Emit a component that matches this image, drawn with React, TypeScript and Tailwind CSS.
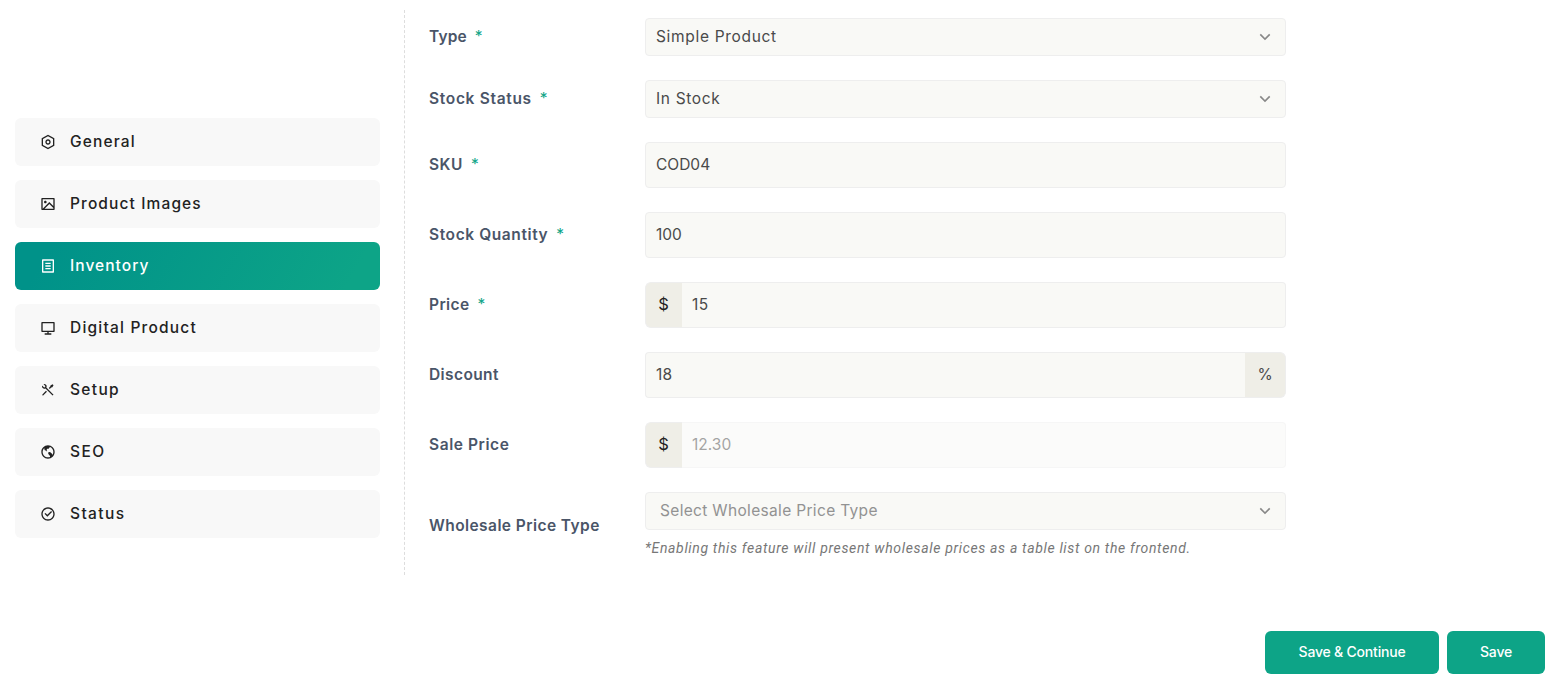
import React from "react";
import {
  RiSettingsLine,
  RiImageLine,
  RiFileListLine,
  RiComputerLine,
  RiToolsLine,
  RiEarthLine,
  RiCheckboxCircleLine,
  RiArrowDownSLine,
} from "react-icons/ri";

const tabs = [
  { label: "General", Icon: RiSettingsLine, track: "tracking-[1.15px]" },
  { label: "Product Images", Icon: RiImageLine, track: "tracking-[1.12px]" },
  { label: "Inventory", Icon: RiFileListLine, track: "tracking-[1.05px]", active: true },
  { label: "Digital Product", Icon: RiComputerLine, track: "tracking-[1.2px]" },
  { label: "Setup", Icon: RiToolsLine, track: "tracking-[1.35px]" },
  { label: "SEO", Icon: RiEarthLine, track: "tracking-[1.4px]" },
  { label: "Status", Icon: RiCheckboxCircleLine, track: "tracking-[1.38px]" },
];

function Row({
  label,
  required,
  track = "tracking-[0.4px]",
  children,
}: {
  label: string;
  required?: boolean;
  track?: string;
  children: React.ReactNode;
}) {
  return (
    <div className="flex items-center">
      <div className="flex w-[216px] shrink-0 gap-2 pb-px text-[15.5px] leading-6 font-semibold whitespace-nowrap text-[#4a5568]">
        <span className={track}>{label}</span>
        {required && <span className="font-normal text-[#0da487]">*</span>}
      </div>
      <div className="w-[641px]">{children}</div>
    </div>
  );
}

const box = "flex w-full rounded border border-[#eeeeee] bg-[#f9f9f6] text-[15.5px] leading-6 text-[#4a4a4a]";

function Select({ value, track, placeholder }: { value: string; track: string; placeholder?: boolean }) {
  return (
    <div className={`${box} h-[38px] items-center justify-between pr-[10.5px] ${placeholder ? "pl-[14px]" : "pl-[10px]"}`}>
      <span className={`pb-px ${track} ${placeholder ? "text-[#929292]" : ""}`}>{value}</span>
      <RiArrowDownSLine className="size-5 text-[#888888]" />
    </div>
  );
}

function Field({
  value,
  track = "tracking-[0px]",
  prefix,
  suffix,
  disabled,
}: {
  value: string;
  track?: string;
  prefix?: string;
  suffix?: string;
  disabled?: boolean;
}) {
  return (
    <div className="flex h-[46px] w-full text-[15.5px] leading-6 text-[#4a4a4a]">
      {prefix && (
        <div className="flex w-[37px] items-center justify-center rounded-l-md border border-r-0 border-[#eeeeee] bg-[#efeee7] pr-px pb-0.5 text-[16.5px] text-[#222222]">
          {prefix}
        </div>
      )}
      <div
        className={`flex flex-1 items-center border border-[#eeeeee] bg-[#f9f9f6] px-[10px] pb-px ${
          prefix ? "rounded-r border-l-0" : suffix ? "rounded-l border-r-0" : "rounded"
        } ${disabled ? "opacity-50" : ""}`}
      >
        <span className={track}>{value}</span>
      </div>
      {suffix && (
        <div className="flex w-[41px] items-center justify-center rounded-r-md border border-l-0 border-[#eeeeee] bg-[#efeee7] pb-px">
          {suffix}
        </div>
      )}
    </div>
  );
}

export default function App() {
  return (
    <div className="flex h-[691px] w-[1560px] flex-col overflow-hidden bg-white px-[15px] font-['Inter',sans-serif]">
      <div className="mt-[10px] flex h-[565px]">
        <nav className="flex w-[365px] flex-col gap-[14px] pt-[108px]">
          {tabs.map(({ label, Icon, track, active }) => (
            <button
              key={label}
              className={`flex h-12 items-center gap-[14px] rounded-md pl-[25px] text-[15.5px] font-medium ${
                active
                  ? "bg-[linear-gradient(120.13deg,#009289_9.59%,#0da487_91.16%)] text-white"
                  : "bg-[#f8f8f8] text-[#222222]"
              }`}
            >
              <Icon className="mt-[0.5px] size-4" />
              <span className={`pb-px ${track}`}>{label}</span>
            </button>
          ))}
        </nav>
        <main className="ml-6 flex flex-1 flex-col gap-6 border-l border-dashed border-[#dddddd] pt-2 pl-6">
          <Row label="Type" required track="tracking-[0.15px]">
            <Select value="Simple Product" track="tracking-[0.68px]" />
          </Row>
          <Row label="Stock Status" required track="tracking-[0.68px]">
            <Select value="In Stock" track="tracking-[0.65px]" />
          </Row>
          <Row label="SKU" required track="tracking-[0.5px]">
            <Field value="COD04" />
          </Row>
          <Row label="Stock Quantity" required track="tracking-[0.6px]">
            <Field value="100" />
          </Row>
          <Row label="Price" required>
            <Field prefix="$" value="15" track="tracking-[0.5px]" />
          </Row>
          <Row label="Discount">
            <Field suffix="%" value="18" track="tracking-[0.3px]" />
          </Row>
          <Row label="Sale Price" track="tracking-[0.58px]">
            <Field prefix="$" value="12.30" disabled />
          </Row>
          <Row label="Wholesale Price Type" track="tracking-[0.43px]">
            <Select value="Select Wholesale Price Type" track="tracking-[0.33px]" placeholder />
            <p className="mt-2 pb-0.5 font-['Roboto',sans-serif] text-[14px] leading-[21px] tracking-[0.66px] text-[#777777] italic">
              <span>*Enabling this feature will present wholesale prices as a table list on the frontend.</span>
            </p>
          </Row>
        </main>
      </div>
      <div className="mt-14 flex justify-end gap-2 text-[14px] font-medium text-white">
        <button className="h-[43px] w-[174px] rounded-md bg-[#0da487] pb-0.5">
          <span className="tracking-[-0.2px]">Save &amp; Continue</span>
        </button>
        <button className="h-[43px] w-[98px] rounded-md bg-[#0da487] pb-0.5">
          <span className="tracking-[-0.2px]">Save</span>
        </button>
      </div>
    </div>
  );
}
